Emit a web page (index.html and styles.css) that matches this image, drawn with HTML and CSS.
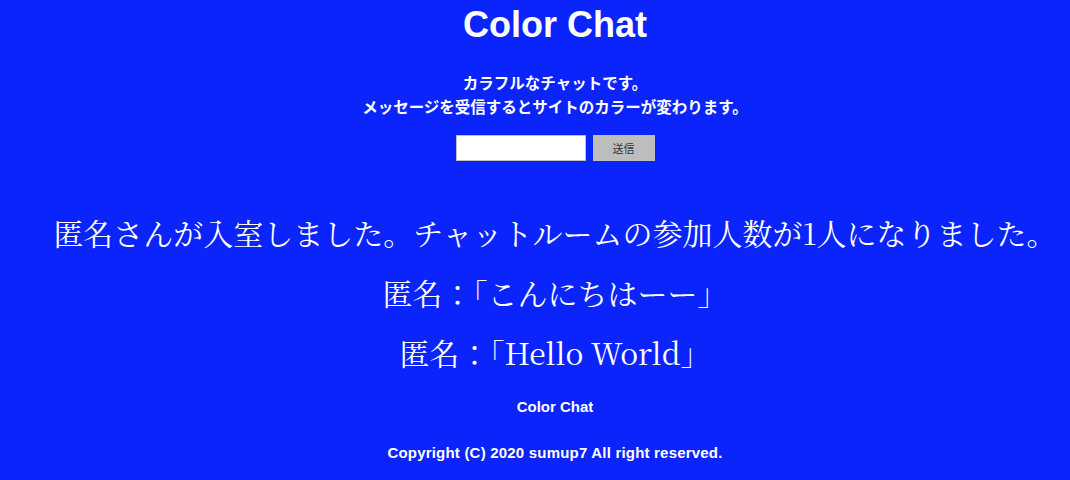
FILE: index.html
```html
<!DOCTYPE html>
<html lang="ja">
<head>
<meta charset="utf-8">
<title>Color Chat</title>
<link rel="stylesheet" href="styles.css">
</head>
<body>
<div class="page">
  <header class="header">
    <h1 class="title">Color Chat</h1>
    <p class="lead">カラフルなチャットです。<br>メッセージを受信するとサイトのカラーが変わります。</p>
    <form class="form">
      <input class="field" type="text">
      <button class="send" type="button">送信</button>
    </form>
  </header>
  <main class="messages">
    <div class="msg">匿名さんが入室しました。チャットルームの参加人数が1人になりました。</div>
    <div class="msg">匿名：「こんにちはーー」</div>
    <div class="msg">匿名：「Hello World」</div>
  </main>
  <footer class="footer">
    <div class="foot-title">Color Chat</div>
    <div class="copy">Copyright (C) 2020 sumup7 All right reserved.</div>
  </footer>
</div>
</body>
</html>
```

FILE: styles.css
```css
html, body {
  margin: 0;
  padding: 0;
  background: #0b24fb;
}
body {
  color: #ffffff;
  font-family: "Liberation Sans", "Noto Sans CJK JP", sans-serif;
}
.page {
  padding-left: 40px;
  text-align: center;
}
.title {
  margin: 3px 0 0;
  font-size: 36px;
  line-height: 44px;
  font-weight: bold;
}
.lead {
  margin: 23px 0 0;
  font-family: "Noto Sans CJK JP", sans-serif;
  font-size: 15.5px;
  line-height: 24px;
  font-weight: bold;
}
.form {
  margin-top: 17px;
  display: flex;
  justify-content: center;
  gap: 7px;
}
.field {
  box-sizing: border-box;
  width: 130px;
  height: 26px;
  margin: 0;
  border: 1px solid #c0c0c0;
  background: #fff;
  padding: 2px 4px;
}
.send {
  box-sizing: border-box;
  width: 62px;
  height: 26px;
  margin: 0;
  border: none;
  background: #bdbdbd;
  color: #333;
  font-family: "Noto Sans CJK JP", sans-serif;
  font-size: 11px;
}
.messages {
  margin-top: 41px;
}
.msg {
  font-family: "Noto Serif CJK JP", "Noto Sans Mono CJK JP", "Noto Sans CJK JP", serif;
  font-size: 30px;
  line-height: 60px;
  white-space: nowrap;
}
.footer {
  margin-top: 15px;
  font-weight: bold;
  font-size: 15px;
  line-height: 20px;
}
.copy {
  margin-top: 26px;
  letter-spacing: 0.2px;
}
```
